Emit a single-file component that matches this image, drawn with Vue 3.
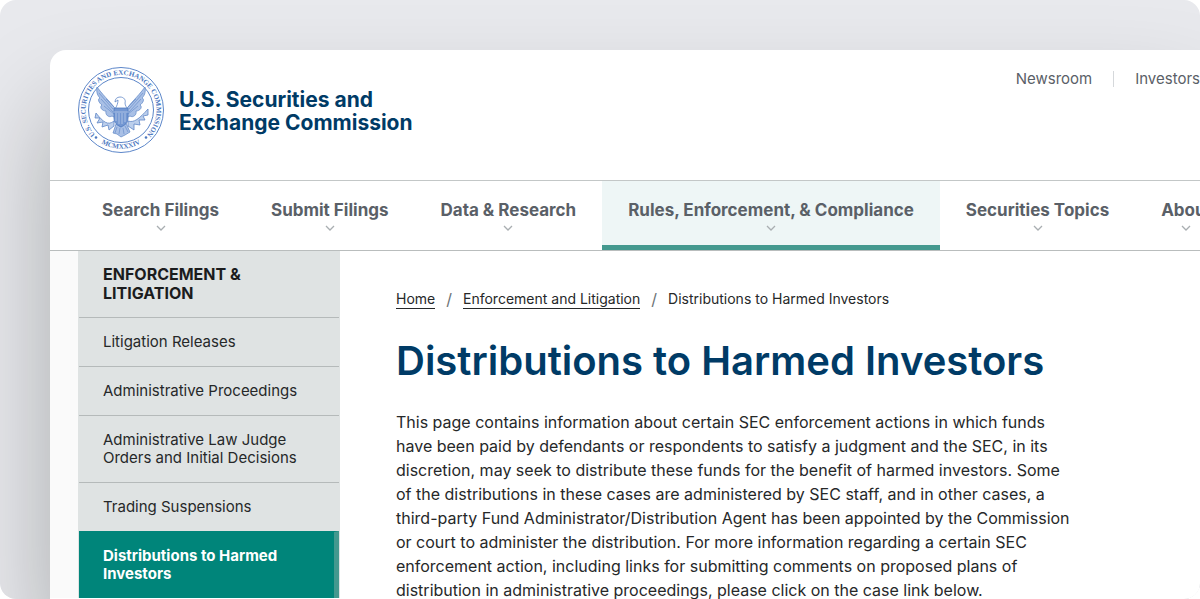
<template>
  <div class="backdrop">
    <div class="site">
      <header class="site-header">
        <a class="brand" href="#">
          <svg class="seal" viewBox="0 0 88 88" aria-hidden="true">
            <defs>
              <path id="seal-top" d="M17.200 67.500 A35.500 35.500 0 1 1 70.800 67.500" />
              <path id="seal-bottom" d="M14 68.600 A39 39 0 0 0 74 68.600" />
            </defs>
            <circle cx="44" cy="44" r="42.500" class="ring" />
            <circle cx="44" cy="44" r="32.500" class="ring" />
            <text class="seal-text"><textPath href="#seal-top" startOffset="50%" text-anchor="middle">U.S. SECURITIES AND EXCHANGE COMMISSION</textPath></text>
            <text class="seal-text"><textPath href="#seal-bottom" startOffset="50%" text-anchor="middle">MCMXXXIV</textPath></text>
            <circle cx="19" cy="71.500" r="1.300" class="dot" />
            <circle cx="69" cy="71.500" r="1.300" class="dot" />
            <!-- wings -->
            <path class="wing" d="M39 44 C34 36 29 33 20 21 C19 27 21 30 23 32 C20 33 22 37 25 39 C22 41 25 45 29 45 C28 49 32 52 35 50 L39 52 Z" />
            <path class="wing" d="M49 44 C54 36 59 33 68 21 C69 27 67 30 65 32 C68 33 66 37 63 39 C66 41 63 45 59 45 C60 49 56 52 53 50 L49 52 Z" />
            <path class="feather" d="M22 27 L36 43 M24 33 L36 46 M27 40 L37 48 M66 27 L52 43 M64 33 L52 46 M61 40 L51 48 M29 33 L37 41 M59 33 L51 41" />
            <!-- head -->
            <path class="head" d="M38 43 C40 40 41 37 41 34 L38 36 C38 33 40 31 43 31 C47 31 49 34 48 37 C48 40 50 41 50 43" />
            <!-- branches -->
            <path class="leaf" d="M37 55 C31 60 26 56 19 47 L18 52 L23 52 L20 57 L26 56 L25 61 L31 59 L32 64 L37 60 Z M51 55 C57 57 62 53 71 43 L71 49 L66 50 L68 54 L62 54 L63 59 L57 58 L57 64 L51 60 Z" />
            <!-- tail -->
            <path class="wing" d="M39 58 L36 67 L40 68 L44 71 L48 69 L53 66 L49 57 L44 61 Z" />
            <!-- shield -->
            <path class="shield" d="M37 42 H51 V52 C51 57 48 59 44 61 C40 59 37 57 37 52 Z" />
            <path class="stripe" d="M39 47 V55 M42 47 V58 M45 47 V58 M48 47 V56 M37 46 H51" />
            <path class="feather" d="M40 61 L38 67 M43 62 L42 68 M46 62 L47 68 M48 60 L51 66" />
          </svg>
          <span class="brand-name">U.S. Securities and<br />Exchange Commission</span>
        </a>
        <nav class="top-links" aria-label="Secondary">
          <a v-for="link in topLinks" :key="link" href="#">{{ link }}</a>
        </nav>
      </header>

      <nav class="main-nav" aria-label="Main">
        <button
          v-for="item in navItems"
          :key="item"
          type="button"
          :class="{ active: item === activeNav }"
          @click="activeNav = item"
        >
          {{ item }}
          <svg class="chevron" viewBox="0 0 10 6" aria-hidden="true"><path d="M1 1 L5 5 L9 1" /></svg>
        </button>
      </nav>

      <div class="content">
        <aside class="sidebar">
          <h2>Enforcement &amp; Litigation</h2>
          <ul>
            <li v-for="page in sidePages" :key="page">
              <a href="#" :class="{ current: page === currentPage }">{{ page }}</a>
            </li>
          </ul>
        </aside>

        <main>
          <nav class="breadcrumb" aria-label="Breadcrumb">
            <a href="#">Home</a>
            <span class="slash">/</span>
            <a href="#">Enforcement and Litigation</a>
            <span class="slash">/</span>
            <span>{{ currentPage }}</span>
          </nav>
          <h1>{{ currentPage }}</h1>
          <p>
            This page contains information about certain SEC enforcement actions in which funds
            have been paid by defendants or respondents to satisfy a judgment and the SEC, in its
            discretion, may seek to distribute these funds for the benefit of harmed investors. Some
            of the distributions in these cases are administered by SEC staff, and in other cases, a
            third-party Fund Administrator/Distribution Agent has been appointed by the Commission
            or court to administer the distribution. For more information regarding a certain SEC
            enforcement action, including links for submitting comments on proposed plans of
            distribution in administrative proceedings, please click on the case link below.
          </p>
        </main>
      </div>
    </div>
  </div>
</template>

<script setup>
import { ref } from 'vue'

const topLinks = ['Newsroom', 'Investors']

const navItems = [
  'Search Filings',
  'Submit Filings',
  'Data & Research',
  'Rules, Enforcement, & Compliance',
  'Securities Topics',
  'About',
]
const activeNav = ref('Rules, Enforcement, & Compliance')

const sidePages = [
  'Litigation Releases',
  'Administrative Proceedings',
  'Administrative Law Judge Orders and Initial Decisions',
  'Trading Suspensions',
  'Distributions to Harmed Investors',
]
const currentPage = 'Distributions to Harmed Investors'
</script>

<style>
body {
  margin: 0;
  background: #fff;
}
</style>

<style scoped>
* {
  box-sizing: border-box;
}

.backdrop {
  height: 100vh;
  padding: 50px 0 0 50px;
  overflow: hidden;
  border-radius: 16px;
  background: #e8e9ed;
  font-family: Inter, "Liberation Sans", sans-serif;
  color: #262829;
}

.site {
  display: flex;
  flex-direction: column;
  height: 100%;
  border-radius: 16px 0 0 0;
  background: #fff;
  box-shadow: 0 60px 100px rgba(0, 10, 0, 0.28);
}

a {
  color: inherit;
  text-decoration: none;
}

/* Header */
.site-header {
  display: flex;
  justify-content: space-between;
  align-items: flex-start;
  flex: none;
  height: 130px;
  padding: 16px 0 0 27px;
}

.brand {
  display: flex;
  align-items: center;
  gap: 14px;
}

.seal {
  width: 88px;
  height: 88px;
}

.ring {
  fill: none;
  stroke: #5c86c9;
  stroke-width: 1;
}

.seal-text {
  font: bold 7px "Liberation Serif", serif;
  fill: #4d78bf;
}

.dot {
  fill: #4d78bf;
}

.wing {
  fill: #a9c0e6;
  stroke: #5f86c6;
  stroke-width: 0.7;
}

.feather {
  fill: none;
  stroke: #5f86c6;
  stroke-width: 0.6;
}

.head {
  fill: #fff;
  stroke: #5f86c6;
  stroke-width: 0.8;
}

.shield {
  fill: #7397d2;
  stroke: #4d78bf;
  stroke-width: 0.8;
}

.stripe {
  fill: none;
  stroke: #c5d5ef;
  stroke-width: 0.7;
}

.leaf {
  fill: #bccfec;
  stroke: #5f86c6;
  stroke-width: 0.8;
}

.brand-name {
  padding-top: 2px;
  font-size: 21px;
  line-height: 23px;
  font-weight: 700;
  color: #003b66;
}

.top-links {
  display: flex;
  align-items: center;
  padding-top: 5px;
  font-size: 15px;
  line-height: 16px;
  color: #5a6067;
}

.top-links a + a {
  margin-left: 21px;
  padding-left: 21px;
  border-left: 1px solid #d5d8db;
}

/* Main navigation */
.main-nav {
  display: flex;
  flex: none;
  height: 71px;
  padding-left: 26px;
  overflow: hidden;
  border-top: 1px solid #c3c7c7;
  border-bottom: 1px solid #b9bdbd;
}

.main-nav button {
  display: flex;
  flex-direction: column;
  align-items: center;
  flex: none;
  gap: 4px;
  padding: 18px 26px 0;
  border: 0;
  background: none;
  font-family: inherit;
  font-size: 17px;
  line-height: 22px;
  font-weight: 700;
  color: #5a6067;
  white-space: nowrap;
  cursor: pointer;
}

.main-nav .active {
  background: #eef6f6;
  box-shadow: inset 0 -5px #44998f;
}

.chevron {
  width: 10px;
  height: 6px;
  fill: none;
  stroke: #a9aeb1;
  stroke-width: 1.3;
}

/* Page body */
.content {
  display: flex;
  flex: 1;
  min-height: 0;
}

.sidebar {
  flex: none;
  align-self: flex-start;
  width: 290px;
  border-left: 28px solid #fafafa;
  background: #dfe3e3;
}

.sidebar h2 {
  margin: 0;
  padding: 14px 25px;
  font-size: 16px;
  line-height: 19px;
  font-weight: 700;
  text-transform: uppercase;
  color: #1b1c1d;
}

.sidebar ul {
  margin: 0;
  padding: 0 1px;
  list-style: none;
}

.sidebar li a {
  display: block;
  padding: 15px 24px;
  border-top: 1px solid #b5baba;
  font-size: 15px;
  line-height: 18px;
}

.sidebar li .current {
  border-top-color: #00857a;
  border-right: 5px solid #44998f;
  background: #00857a;
  font-weight: 700;
  color: #fff;
}

main {
  flex: 1;
  min-width: 0;
  padding: 39px 0 0 56px;
}

.breadcrumb {
  display: flex;
  gap: 11px;
  font-size: 14px;
  line-height: 18px;
}

.breadcrumb a {
  border-bottom: 1px solid #262829;
}

.slash {
  font-size: 16px;
  color: #6c7276;
}

h1 {
  margin: 27px 0 24px;
  font-size: 40px;
  line-height: 50px;
  font-weight: 600;
  color: #003b66;
}

p {
  max-width: 680px;
  margin: 0;
  font-size: 16px;
  line-height: 24px;
}
</style>
